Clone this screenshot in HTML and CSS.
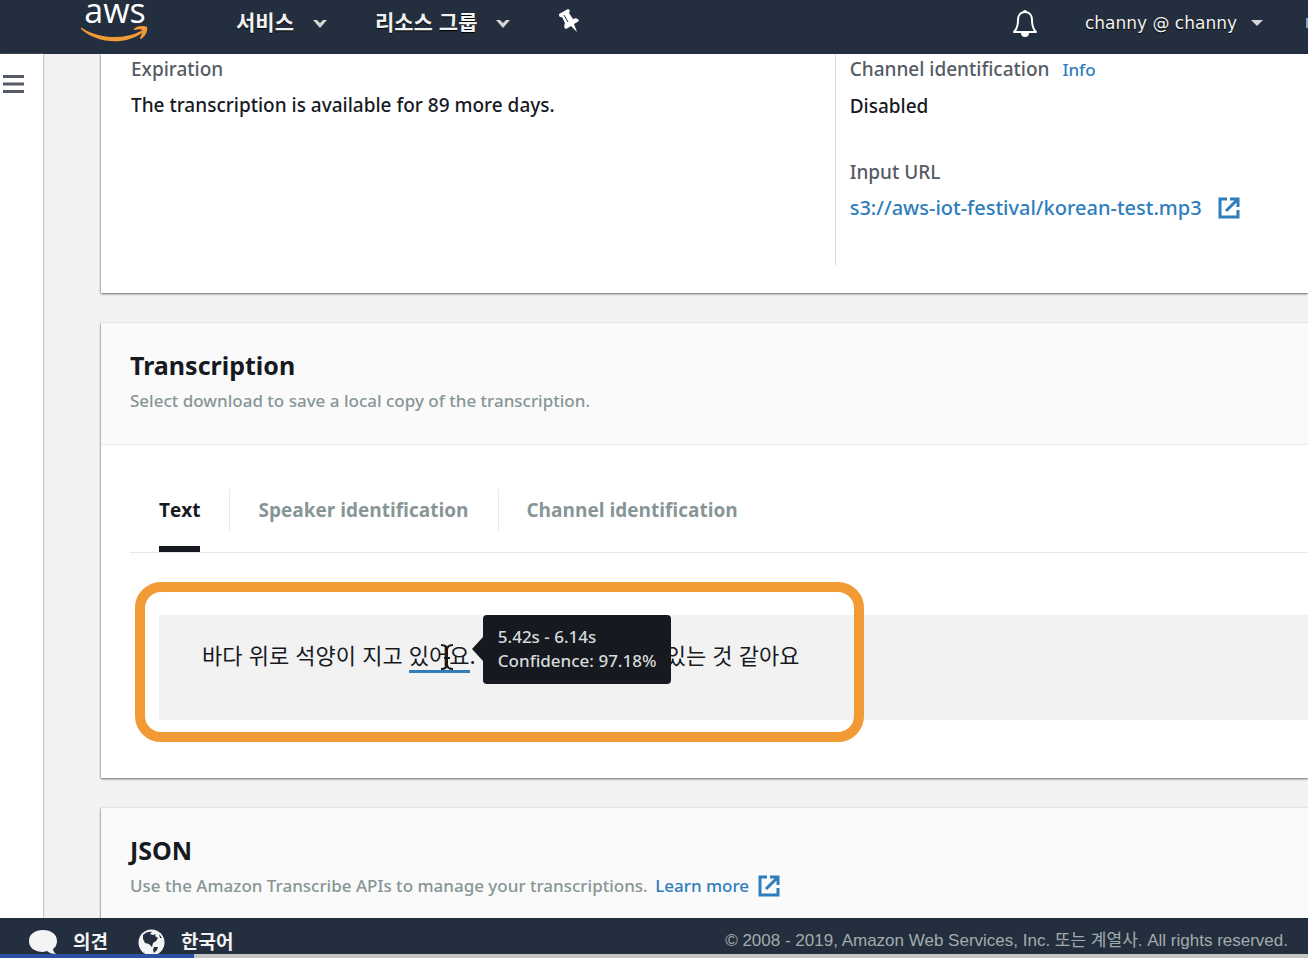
FILE: index.html
```html
<!DOCTYPE html>
<html lang="ko">

<head>
    <meta charset="UTF-8">
    <meta name="viewport" content="width=device-width, initial-scale=1.0">
    <title>Amazon Transcribe</title>
    <link rel="stylesheet" href="styles.css">
</head>

<body>
    <header class="topbar">
        <a href="#" class="logo">
            <span class="logo-text">aws</span>
            <svg class="logo-smile" viewBox="0 0 68 16" width="68" height="16">
                <path d="M1 2 C18 13 43 14 60 5 C61 4 63 6 61 7 C43 20 15 17 0 3 C0 2 0 1 1 2 Z" fill="#f29a36" />
                <path d="M53 3 C57 -1 64 0 66 1 C67 4 65 10 60 13 C59 13 59 13 59 12 C61 8 62 5 61 4 C60 3 57 3 54 4 C53 4 52 4 53 3 Z" fill="#f29a36" />
            </svg>
        </a>
        <nav class="nav">
            <button class="nav-item">서비스
                <svg class="chevron" viewBox="0 0 16 10" width="16" height="10"><path d="M1 1h4l3 3 3-3h4L8 9z" fill="#d5d5d5" /></svg>
            </button>
            <button class="nav-item">리소스 그룹
                <svg class="chevron" viewBox="0 0 16 10" width="16" height="10"><path d="M1 1h4l3 3 3-3h4L8 9z" fill="#d5d5d5" /></svg>
            </button>
            <button class="nav-item" aria-label="Pin">
                <svg viewBox="0 0 22 24" width="22" height="24">
                    <path d="M1 5 L10 0 Q13 1 11 4 L15 10 Q20 8 21 12 L16 15 L19 23 L13 17 L8 20 Q5 19 7 14 L4 8 Q1 9 1 5 Z" fill="#fff" />
                    <path d="M6 6 L10 13" stroke="#232f3e" stroke-width="1" />
                </svg>
            </button>
        </nav>
        <div class="account">
            <button class="nav-item" aria-label="Notifications">
                <svg viewBox="0 0 26 28" width="26" height="28">
                    <path d="M13 3 C8 3 6 7 6 11 C6 17 5 20 2 23 H24 C21 20 20 17 20 11 C20 7 18 3 13 3 Z" fill="none" stroke="#fff" stroke-width="2" stroke-linejoin="round" />
                    <path d="M11 3 a2 2 0 0 1 4 0 M9 24 h8 a4 4 0 0 1 -8 0 Z" fill="#fff" />
                </svg>
            </button>
            <button class="nav-item user">channy @ channy
                <svg viewBox="0 0 12 8" width="12" height="8"><path d="M0 1h12L6 7z" fill="#d5d5d5" /></svg>
            </button>
            <span class="region-edge"></span>
        </div>
    </header>

    <div class="page">
        <aside class="sidebar">
            <button class="menu-btn" aria-label="Menu">
                <svg viewBox="0 0 21 18" width="21" height="18"><path d="M0 1.500h21M0 9h21M0 16.500h21" stroke="#545b64" stroke-width="3" /></svg>
            </button>
        </aside>

        <main class="content">
            <section class="card details">
                <dl class="details-col">
                    <dt>Expiration</dt>
                    <dd>The transcription is available for 89 more days.</dd>
                </dl>
                <dl class="details-col details-right">
                    <dt>Channel identification <a href="#" class="info">Info</a></dt>
                    <dd>Disabled</dd>
                    <dt>Input URL</dt>
                    <dd>
                        <a href="#" class="ext-link url">s3://aws-iot-festival/korean-test.mp3
                            <svg class="ext-icon" viewBox="0 0 22 22" width="22" height="22"><path d="M9 2H2v18h18v-7M12 2h8v8M19 3L8 14" fill="none" stroke="#2e7dbd" stroke-width="3" /></svg>
                        </a>
                    </dd>
                </dl>
            </section>

            <section class="card">
                <div class="card-header">
                    <h2>Transcription</h2>
                    <p>Select download to save a local copy of the transcription.</p>
                </div>
                <div class="card-body">
                    <div class="tabs" role="tablist">
                        <button class="tab active" role="tab"><span>Text</span></button>
                        <button class="tab" role="tab"><span>Speaker identification</span></button>
                        <button class="tab" role="tab"><span>Channel identification</span></button>
                    </div>
                    <div class="transcript">
                        <p>바다 위로 석양이 지고 <span class="word">있어요<span class="tooltip">5.42s - 6.14s<br>Confidence: 97.18%</span><svg class="cursor" viewBox="0 0 14 26" width="14" height="26"><path d="M1 1 Q7 1 7 6 Q7 1 13 1 M7 5 V21 M1 25 Q7 25 7 20 Q7 25 13 25 M4 14 H10" fill="none" stroke="#16191f" stroke-width="2" /></svg></span>.<span class="rest">있는 것 같아요</span></p>
                        <div class="highlight"></div>
                    </div>
                </div>
            </section>

            <section class="card">
                <div class="card-header">
                    <h2>JSON</h2>
                    <p>Use the Amazon Transcribe APIs to manage your transcriptions.
                        <a href="#" class="ext-link learn">Learn more
                            <svg class="ext-icon" viewBox="0 0 22 22" width="22" height="22"><path d="M9 2H2v18h18v-7M12 2h8v8M19 3L8 14" fill="none" stroke="#2e7dbd" stroke-width="3" /></svg>
                        </a>
                    </p>
                </div>
            </section>
        </main>
    </div>

    <footer class="footer">
        <button class="footer-item">
            <svg viewBox="0 0 28 25" width="28" height="25"><path d="M14 1 C6 1 0 5 0 12 C0 19 6 23 14 23 L18 22 Q21 25 27 25 Q24 23 24 20 Q28 17 28 12 C28 5 22 1 14 1 Z" fill="#f4f4f4" /></svg>
            의견
        </button>
        <button class="footer-item">
            <svg viewBox="0 0 27 25" width="27" height="25">
                <circle cx="13.500" cy="13.500" r="13" fill="#f4f4f4" />
                <path d="M5 6 Q9 2 14 3 L12 5 L15 6 L18 5 L17 7 L20 9 Q19 12 15 14 L14 18 L11 15 L7 14 L5 10 Z M16 18 L20 18 L19 21 L16 24 L15 21 Z M21 5 L24 9 L22 9 Z" fill="#232f3e" />
            </svg>
            한국어
        </button>
        <span class="copyright">© 2008 - 2019, Amazon Web Services, Inc. 또는 계열사. All rights reserved.</span>
    </footer>
    <div class="strip">
        <div class="strip-blue"></div>
        <div class="strip-gray"></div>
    </div>
</body>

</html>
```
FILE: styles.css
```css
* {
    box-sizing: border-box;
}

body {
    margin: 0;
    height: 100vh;
    display: flex;
    flex-direction: column;
    overflow: hidden;
    background-color: #f2f2f2;
    color: #16191f;
    font-family: 'Noto Sans', 'Noto Sans CJK KR', sans-serif;
    font-size: 19px;
    font-weight: 500;
    line-height: 28px;
}

button {
    border: 0;
    padding: 0;
    background: none;
    font: inherit;
    color: inherit;
    cursor: pointer;
    white-space: nowrap;
}

a {
    color: #2e7dbd;
    text-decoration: none;
}

h2,
p,
dl,
dd {
    margin: 0;
}

svg {
    flex-shrink: 0;
}

/* top bar */
.topbar {
    display: flex;
    flex-shrink: 0;
    height: 54px;
    padding-left: 81px;
    background-color: #232f3e;
    color: #f2f2f2;
}

.logo {
    display: flex;
    flex-direction: column;
    align-items: center;
    gap: 5px;
    width: 68px;
    color: #fff;
}

.logo-text {
    font-family: 'Open Sans', sans-serif;
    font-size: 34px;
    line-height: 21px;
}

.nav {
    display: flex;
    gap: 47px;
    margin-left: 87px;
    padding-bottom: 12px;
}

.nav-item {
    display: flex;
    align-items: center;
    gap: 18px;
    font-family: 'Noto Sans CJK KR', sans-serif;
    font-size: 21px;
    font-weight: 700;
    text-shadow: 0 1px 1px #000;
}

.chevron {
    margin-top: 6px;
}

.account {
    display: flex;
    gap: 43px;
    margin-left: auto;
    padding-bottom: 8px;
}

.user {
    gap: 14px;
    font-family: 'DejaVu Sans', sans-serif;
    font-size: 17px;
    font-weight: 400;
}

.account .user {
    padding-left: 4px;
}

.region-edge {
    align-self: center;
    width: 2px;
    height: 10px;
    background-color: #7aa5c9;
}

/* page */
.page {
    display: flex;
    flex: 1;
    min-height: 0;
}

.sidebar {
    width: 43px;
    flex-shrink: 0;
    padding: 21px 3px;
    background-color: #fff;
    box-shadow: 1px 0 1px #c4cbcb;
}

.menu-btn {
    display: flex;
}

.content {
    flex: 1;
    min-width: 0;
    padding-left: 58px;
    overflow: hidden;
}

.card {
    margin-bottom: 30px;
    background-color: #fff;
    box-shadow: 0 1px 2px #606b6f, -1px 0 1px #d5dbdb;
}

.card-header {
    height: 122px;
    padding: 26px 29px;
    background-color: #fafafa;
    border-bottom: 1px solid #e6eaea;
}

.card-header h2 {
    font-size: 25px;
    line-height: 32px;
}

.card-header p {
    margin-top: 6px;
    color: #879596;
    font-size: 17px;
}

.details {
    display: grid;
    grid-template-columns: 31fr 20fr;
    padding-bottom: 28px;
}

.details-col {
    padding: 1px 30px 0;
}

.details-right {
    padding: 1px 14px 43px;
    border-left: 1px solid #d5dbdb;
}

.details dt {
    color: #545b64;
}

.details dd {
    margin-top: 8px;
}

.details dd + dt {
    margin-top: 38px;
}

.info {
    margin-left: 8px;
    font-size: 17px;
}

.ext-link {
    display: inline-flex;
    align-items: center;
}

.url {
    gap: 16px;
    font-size: 20px;
}

.learn {
    gap: 9px;
    margin-left: 3px;
}

/* tabs */
.card-body {
    padding: 44px 0 58px 29px;
}

.tabs {
    display: flex;
    border-bottom: 1px solid #e6eaea;
}

.tab {
    height: 63px;
    padding: 0 29px;
    color: #879596;
    font-family: 'Open Sans', sans-serif;
    font-weight: 700;
}

.tab span {
    display: block;
    height: 63px;
    line-height: 42px;
    border-bottom: 6px solid transparent;
}

.tab + .tab {
    background: linear-gradient(#e6eaea, #e6eaea) left top / 1px 42px no-repeat;
}

.tab.active {
    color: #16191f;
}

.tab.active span {
    border-color: #16191f;
}

/* transcript */
.transcript {
    position: relative;
    margin: 62px 0 0 29px;
    padding: 23px 43px 47px;
    background-color: #f2f2f2;
    font-family: 'Noto Sans CJK KR', sans-serif;
    font-size: 22px;
    font-weight: 400;
    line-height: 32px;
    white-space: nowrap;
}

.word {
    position: relative;
    display: inline-block;
    border-bottom: 3px solid #2e7dbd;
    line-height: 32px;
}

.rest {
    margin-left: 190px;
}

.tooltip {
    position: absolute;
    z-index: 1;
    left: 74px;
    top: -23px;
    padding: 10px 15px 11px;
    border-radius: 4px;
    background-color: #16191f;
    color: #d5dbdb;
    font-family: 'Noto Sans', sans-serif;
    font-size: 17px;
    font-weight: 500;
    line-height: 24px;
}

.tooltip::before {
    content: '';
    position: absolute;
    right: 100%;
    top: 22px;
    border: 12px solid transparent;
    border-left-width: 0;
    border-right: 11px solid #16191f;
}

.cursor {
    position: absolute;
    left: 31px;
    top: 6px;
}

.highlight {
    position: absolute;
    left: -24px;
    top: -33px;
    width: 729px;
    height: 160px;
    border: 10px solid #f29a36;
    border-radius: 26px;
}

/* footer */
.footer {
    display: flex;
    flex-shrink: 0;
    align-items: flex-end;
    gap: 30px;
    height: 36px;
    padding: 0 20px 0 29px;
    background-color: #232f3e;
    color: #f2f2f2;
}

.footer-item {
    display: flex;
    align-items: center;
    gap: 16px;
    font-family: 'Noto Sans CJK KR', sans-serif;
    font-size: 19px;
    font-weight: 700;
    line-height: 26px;
}

.copyright {
    margin-left: auto;
    color: #a3abab;
    font-family: 'Liberation Sans', 'Noto Sans CJK KR', sans-serif;
    font-size: 17px;
    font-weight: 400;
    line-height: 26px;
    white-space: nowrap;
}

.strip {
    display: flex;
    height: 4px;
    flex-shrink: 0;
}

.strip-blue {
    width: 194px;
    background-color: #2c51a4;
}

.strip-gray {
    flex: 1;
    background-color: #c4c4c4;
}
```
